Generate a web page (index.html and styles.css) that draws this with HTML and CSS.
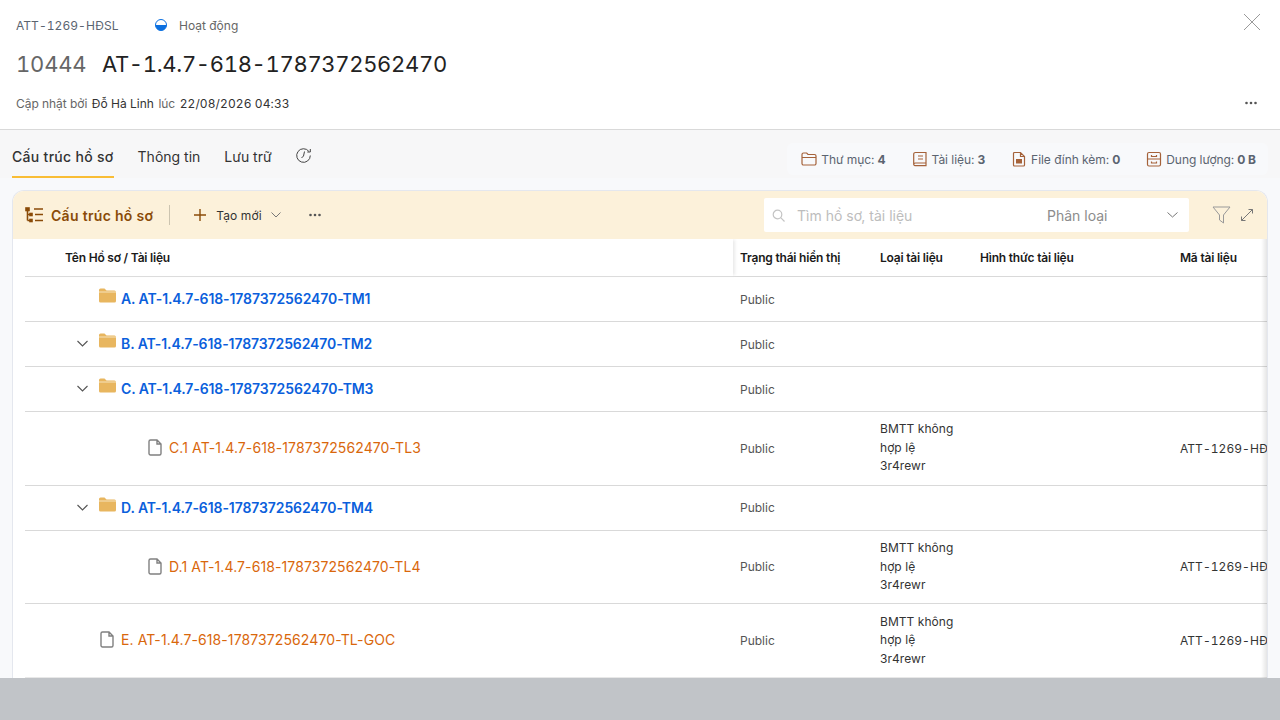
FILE: index.html
```html
<!DOCTYPE html>
<html lang="vi">
<head>
    <meta charset="UTF-8">
    <title>Cấu trúc hồ sơ</title>
    <link rel="stylesheet" href="styles.css">
</head>
<body>
    <div class="drawer">
        <header class="head">
            <div class="head-top">
                <span class="code-tag">ATT-1269-HĐSL</span>
                <svg class="status-dot" width="12" height="12" viewBox="0 0 12 12"><circle cx="6" cy="6" r="5.5" fill="#fff" stroke="#0b6fe0"/><path d="M.5 6h11A5.5 5.5 0 0 1 .5 6z" fill="#0b6fe0"/></svg>
                <span class="status-text">Hoạt động</span>
            </div>
            <div class="head-title"><span class="num">10444</span><span class="name">AT-1.4.7-618-1787372562470</span></div>
            <div class="head-meta">
                <span class="muted">Cập nhật bởi</span><span>Đỗ Hà Linh</span><span class="muted">lúc</span><span class="date">22/08/2026 04:33</span>
                <svg class="meta-more" width="12" height="4" viewBox="0 0 12 4" fill="#555"><circle cx="1.5" cy="2" r="1.3"/><circle cx="6" cy="2" r="1.3"/><circle cx="10.5" cy="2" r="1.3"/></svg>
            </div>
            <svg class="close" width="18" height="18" viewBox="0 0 18 18" stroke="#9a9a9a" fill="none"><path d="M1 1l16 16M17 1L1 17"/></svg>
        </header>

        <div class="content">
            <div class="tabbar">
                <nav class="tabs">
                    <span class="tab active">Cấu trúc hồ sơ</span>
                    <span class="tab">Thông tin</span>
                    <span class="tab">Lưu trữ</span>
                    <svg class="tab-icon" width="15" height="15" viewBox="0 0 15 15" fill="none" stroke="#444"><path d="M12.9 3.400A6.800 6.800 0 1 0 14.300 7.500M14.300 1v3h-3M8.500 3.500L7.500 8 5.500 10"/></svg>
                </nav>
                <div class="stats">
                    <span class="stat">
                        <svg width="16" height="16" viewBox="0 0 16 16" fill="none" stroke="#a5623a" stroke-width="1.200"><path d="M1 3.500a1.500 1.500 0 0 1 1.500-1.500h3.200l1.300 1.500h6.500a1.500 1.500 0 0 1 1.500 1.500v7.500a1.500 1.500 0 0 1-1.500 1.500h-11A1.500 1.500 0 0 1 1 12.500zM1 6.500h14"/></svg>
                        Thư mục: <b>4</b>
                    </span>
                    <span class="stat">
                        <svg width="16" height="16" viewBox="0 0 16 16" fill="none" stroke="#a5623a" stroke-width="1.200"><path d="M3.500 1.500h10.500v10.500H3.500A1.800 1.800 0 0 0 1.700 13.800V3.300A1.800 1.800 0 0 1 3.500 1.500zM1.700 13.300a1.800 1.800 0 0 0 1.800 1.400H14V12M6 5h5M6 8h5"/></svg>
                        Tài liệu: <b>3</b>
                    </span>
                    <span class="stat">
                        <svg width="16" height="16" viewBox="0 0 16 16" fill="none" stroke="#a5623a" stroke-width="1.200"><path d="M2.500 2.500a1 1 0 0 1 1-1h6L13.500 5.500v8.500a1 1 0 0 1-1 1h-9a1 1 0 0 1-1-1zM9.500 1.500v4h4"/><path d="M5 8h6v4.500H5z" fill="#a5623a" stroke="none"/></svg>
                        File đính kèm: <b>0</b>
                    </span>
                    <span class="stat">
                        <svg width="16" height="16" viewBox="0 0 16 16" fill="none" stroke="#a5623a" stroke-width="1.200"><rect x="1.500" y="1.500" width="13" height="13.500" rx="1.500"/><path d="M1.500 8h13M5.500 4v1.500h5V4M5.500 10.500V12h5v-1.500"/></svg>
                        Dung lượng: <b>0 B</b>
                    </span>
                </div>
            </div>

            <section class="panel">
                <div class="toolbar">
                    <svg class="tree-icon" width="18" height="16" viewBox="0 0 18 16" fill="none" stroke="#8a4b08" stroke-width="1.600"><path d="M2.500 2v11.500M2.500 7.500h4M2.500 13.500h4M9 2h9M10 7.500h8M10 13.500h8"/><rect x="1" y="1" width="3" height="2.500" fill="#8a4b08"/><rect x="5" y="6.500" width="2" height="2" fill="#8a4b08"/><rect x="5" y="12.500" width="2" height="2" fill="#8a4b08"/></svg>
                    <span class="toolbar-title">Cấu trúc hồ sơ</span>
                    <span class="divider"></span>
                    <svg class="plus" width="14" height="14" viewBox="0 0 14 14" stroke="#8a4b08" stroke-width="1.400"><path d="M7 1v12M1 7h12"/></svg>
                    <span class="new-label">Tạo mới</span>
                    <svg class="new-caret" width="10" height="6" viewBox="0 0 10 6" fill="none" stroke="#777"><path d="M.5.500L5 5 9.500.500"/></svg>
                    <svg class="tool-more" width="12" height="4" viewBox="0 0 12 4" fill="#555"><circle cx="1.500" cy="2" r="1.300"/><circle cx="6" cy="2" r="1.300"/><circle cx="10.500" cy="2" r="1.300"/></svg>
                    <div class="search">
                        <svg width="13" height="13" viewBox="0 0 13 13" fill="none" stroke="#c4c4c4" stroke-width="1.200"><circle cx="5.500" cy="5.500" r="4.300"/><path d="M8.700 8.700L12.500 12.500"/></svg>
                        <span class="search-text">Tìm hồ sơ, tài liệu</span>
                        <span class="search-type">Phân loại</span>
                        <svg width="11" height="6" viewBox="0 0 11 6" fill="none" stroke="#777"><path d="M.5.500L5.500 5l5-4.500"/></svg>
                    </div>
                    <svg class="filter" width="19" height="18" viewBox="0 0 19 18" fill="none" stroke="#999"><path d="M1 1h17l-6.500 8v8l-4-3V9z"/></svg>
                    <svg class="expand" width="14" height="14" viewBox="0 0 14 14" fill="none" stroke="#777"><path d="M1.500 12.500l11-11M8.500 1.500h4v4M1.500 8.500v4h4"/></svg>
                </div>

                <div class="table">
                    <div class="row row-head">
                        <div class="cell-name head-name">Tên Hồ sơ / Tài liệu</div>
                        <div>Trạng thái hiển thị</div>
                        <div>Loại tài liệu</div>
                        <div>Hình thức tài liệu</div>
                        <div>Mã tài liệu</div>
                    </div>

                    <div class="row">
                        <div class="cell-name lvl-1">
                            <svg class="folder" width="17" height="15" viewBox="0 0 17 15"><path d="M0 2a1.500 1.500 0 0 1 1.500-1.500h4L7.500 2.500h8A1.500 1.500 0 0 1 17 4v9a1.500 1.500 0 0 1-1.500 1.500h-14A1.500 1.500 0 0 1 0 13z" fill="#e8b65f"/><path d="M0 4h17" stroke="#f6e3bd"/></svg>
                            <a class="link-folder">A. AT-1.4.7-618-1787372562470-TM1</a>
                        </div>
                        <div class="cell-status">Public</div><div></div><div></div><div></div>
                    </div>

                    <div class="row">
                        <div class="cell-name lvl-1">
                            <svg class="caret" width="11" height="7" viewBox="0 0 11 7" fill="none" stroke="#555" stroke-width="1.100"><path d="M.5 1l5 5 5-5"/></svg>
                            <svg class="folder" width="17" height="15" viewBox="0 0 17 15"><path d="M0 2a1.500 1.500 0 0 1 1.500-1.500h4L7.500 2.500h8A1.500 1.500 0 0 1 17 4v9a1.500 1.500 0 0 1-1.500 1.500h-14A1.500 1.500 0 0 1 0 13z" fill="#e8b65f"/><path d="M0 4h17" stroke="#f6e3bd"/></svg>
                            <a class="link-folder">B. AT-1.4.7-618-1787372562470-TM2</a>
                        </div>
                        <div class="cell-status">Public</div><div></div><div></div><div></div>
                    </div>

                    <div class="row">
                        <div class="cell-name lvl-1">
                            <svg class="caret" width="11" height="7" viewBox="0 0 11 7" fill="none" stroke="#555" stroke-width="1.100"><path d="M.5 1l5 5 5-5"/></svg>
                            <svg class="folder" width="17" height="15" viewBox="0 0 17 15"><path d="M0 2a1.500 1.500 0 0 1 1.500-1.500h4L7.500 2.500h8A1.500 1.500 0 0 1 17 4v9a1.500 1.500 0 0 1-1.500 1.500h-14A1.500 1.500 0 0 1 0 13z" fill="#e8b65f"/><path d="M0 4h17" stroke="#f6e3bd"/></svg>
                            <a class="link-folder">C. AT-1.4.7-618-1787372562470-TM3</a>
                        </div>
                        <div class="cell-status">Public</div><div></div><div></div><div></div>
                    </div>

                    <div class="row row-tall">
                        <div class="cell-name lvl-2">
                            <svg class="file" width="14" height="17" viewBox="0 0 14 17" fill="none" stroke="#808080" stroke-width="1.400"><path d="M1 2.500A1.500 1.500 0 0 1 2.500 1H9l4 4v9.500a1.500 1.500 0 0 1-1.500 1.500h-9A1.500 1.500 0 0 1 1 14.500zM9 1v4h4"/></svg>
                            <a class="link-file">C.1 AT-1.4.7-618-1787372562470-TL3</a>
                        </div>
                        <div class="cell-status">Public</div>
                        <div class="cell-type">BMTT không hợp lệ<br>3r4rewr</div>
                        <div></div>
                        <div class="cell-code">ATT-1269-HĐSL</div>
                    </div>

                    <div class="row row-low">
                        <div class="cell-name lvl-1">
                            <svg class="caret" width="11" height="7" viewBox="0 0 11 7" fill="none" stroke="#555" stroke-width="1.100"><path d="M.5 1l5 5 5-5"/></svg>
                            <svg class="folder" width="17" height="15" viewBox="0 0 17 15"><path d="M0 2a1.500 1.500 0 0 1 1.500-1.500h4L7.500 2.500h8A1.500 1.500 0 0 1 17 4v9a1.500 1.500 0 0 1-1.500 1.500h-14A1.500 1.500 0 0 1 0 13z" fill="#e8b65f"/><path d="M0 4h17" stroke="#f6e3bd"/></svg>
                            <a class="link-folder">D. AT-1.4.7-618-1787372562470-TM4</a>
                        </div>
                        <div class="cell-status">Public</div><div></div><div></div><div></div>
                    </div>

                    <div class="row row-tall row-short row-low">
                        <div class="cell-name lvl-2">
                            <svg class="file" width="14" height="17" viewBox="0 0 14 17" fill="none" stroke="#808080" stroke-width="1.400"><path d="M1 2.500A1.500 1.500 0 0 1 2.500 1H9l4 4v9.500a1.500 1.500 0 0 1-1.500 1.500h-9A1.500 1.500 0 0 1 1 14.500zM9 1v4h4"/></svg>
                            <a class="link-file">D.1 AT-1.4.7-618-1787372562470-TL4</a>
                        </div>
                        <div class="cell-status">Public</div>
                        <div class="cell-type">BMTT không hợp lệ<br>3r4rewr</div>
                        <div></div>
                        <div class="cell-code">ATT-1269-HĐSL</div>
                    </div>

                    <div class="row row-tall row-last">
                        <div class="cell-name lvl-1">
                            <svg class="file" width="14" height="17" viewBox="0 0 14 17" fill="none" stroke="#808080" stroke-width="1.400"><path d="M1 2.500A1.500 1.500 0 0 1 2.500 1H9l4 4v9.500a1.500 1.500 0 0 1-1.500 1.500h-9A1.500 1.500 0 0 1 1 14.500zM9 1v4h4"/></svg>
                            <a class="link-file">E. AT-1.4.7-618-1787372562470-TL-GOC</a>
                        </div>
                        <div class="cell-status">Public</div>
                        <div class="cell-type">BMTT không hợp lệ<br>3r4rewr</div>
                        <div></div>
                        <div class="cell-code">ATT-1269-HĐSL</div>
                    </div>
                    <div class="edge-shadow"></div>
                </div>
            </section>
        </div>
    </div>
</body>
</html>
```

FILE: styles.css
```css
* {
    box-sizing: border-box;
}
html, body {
    margin: 0;
    height: 720px;
    overflow: hidden;
}
body {
    font-family: Inter, "Noto Sans", sans-serif;
    background: #c1c4c8;
    color: #222;
}
svg {
    display: block;
    flex: none;
}

.drawer {
    height: 678px;
    background: #f8f9fb;
    overflow: hidden;
    display: flex;
    flex-direction: column;
}

/* header */
.head {
    position: relative;
    height: 130px;
    padding: 17px 16px 0;
    background: #fff;
    border-bottom: 1px solid #d9d9d9;
}
.head-top {
    display: flex;
    align-items: center;
    height: 16px;
    font-size: 12px;
}
.code-tag {
    width: 139px;
    font-variant-numeric: tabular-nums;
    letter-spacing: 0.05px;
    color: #5b6470;
}
.status-text {
    margin-left: 12px;
    color: #666;
}
.head-title {
    display: flex;
    margin-top: 16px;
    height: 30px;
    line-height: 30px;
    font-size: 22px;
    font-variant-numeric: tabular-nums;
}
.num {
    width: 86px;
    letter-spacing: -0.2px;
    color: #666;
}
.name {
    letter-spacing: -0.32px;
    color: #222;
}
.head-meta {
    display: flex;
    align-items: center;
    gap: 4.5px;
    margin-top: 16px;
    height: 16px;
    font-size: 12px;
    color: #333;
}
.muted {
    letter-spacing: -0.05px;
    color: #666;
}
.date {
    font-variant-numeric: tabular-nums;
    letter-spacing: 0.1px;
}
.meta-more {
    margin-left: auto;
    margin-right: 7px;
}
.close {
    position: absolute;
    top: 13px;
    right: 19px;
}

/* tabs */
.content {
    flex: 1;
    min-height: 0;
    display: flex;
    flex-direction: column;
    padding: 0 12px;
}
.tabbar {
    display: flex;
    justify-content: space-between;
    height: 48px;
    margin: 0 -12px;
    padding: 0 12px;
    background: #f7f7f8;
}
.tabs {
    display: flex;
    align-items: flex-start;
    gap: 24px;
}
.tab {
    height: 48px;
    padding-top: 18px;
    line-height: 18px;
    font-size: 14px;
    color: #333;
}
.tab.active {
    font-weight: 500;
    letter-spacing: 0.3px;
    border-bottom: 2px solid #f9bd35;
}
.tab-icon {
    margin-top: 18px;
}
.stats {
    display: flex;
    align-items: center;
    gap: 26px;
    height: 32px;
    margin-top: 13px;
    padding: 0 12px 0 14px;
    border-radius: 6px;
    background: #f8f9fb;
    font-size: 12px;
    letter-spacing: -0.05px;
    color: #5b6470;
}
.stat {
    display: flex;
    align-items: center;
    gap: 4px;
}
.stat b {
    font-weight: 700;
    margin-left: -1px;
}

/* panel */
.panel {
    flex: 1;
    min-height: 0;
    margin-top: 12px;
    border: 1px solid #e4e7ee;
    border-bottom: 0;
    border-radius: 12px 12px 0 0;
    background: #fff;
    overflow: hidden;
    display: flex;
    flex-direction: column;
}
.toolbar {
    display: flex;
    align-items: center;
    flex: none;
    height: 48px;
    padding: 0 13px 0 12px;
    background: #fcf1da;
}
.toolbar-title {
    margin-left: 8px;
    font-size: 14px;
    font-weight: 600;
    letter-spacing: 0.3px;
    color: #8a4b08;
}
.divider {
    width: 1px;
    height: 20px;
    margin: 0 23px 0 16px;
    background: #ccc4b0;
}
.new-label {
    margin-left: 9px;
    font-size: 12px;
    letter-spacing: 0.1px;
    color: #333;
}
.new-caret {
    margin-left: 9px;
}
.tool-more {
    margin-left: 28px;
}
.search {
    display: flex;
    align-items: center;
    width: 425px;
    height: 34px;
    margin-left: auto;
    padding: 0 11px 0 8px;
    border-radius: 2px;
    background: #fff;
    font-size: 14px;
}
.search-text {
    width: 250px;
    margin-left: 12px;
    color: #bdbdbd;
}
.search-type {
    flex: 1;
    color: #8c8c8c;
}
.filter {
    margin-left: 23px;
}
.expand {
    margin-left: 9px;
}

/* table */
.table {
    position: relative;
    flex: 1;
    min-height: 0;
    padding-left: 12px;
    overflow: hidden;
}
.row {
    display: grid;
    grid-template-columns: 708px 140px 100px 200px 200px;
    width: 1348px;
    align-items: center;
    height: 45px;
    border-bottom: 1px solid #d9d9d9;
    font-size: 12px;
    color: #333;
}
.row > div {
    padding-left: 7px;
}
.row-head {
    height: 38px;
    font-weight: 600;
    letter-spacing: -0.2px;
    color: #1a1a1a;
}
.row-tall {
    height: 74px;
}
.row-short {
    height: 73px;
}
.row-last {
    border-bottom: 1px solid #e8e8e8;
}
.row > .cell-name {
    display: flex;
    align-items: center;
    align-self: stretch;
    padding-bottom: 2px;
    font-size: 14px;
}
.row > .head-name {
    padding-left: 40px;
    padding-bottom: 0;
    font-size: 12px;
    box-shadow: 3px 0 3px -1px #eaeaea;
}
.row > .lvl-1 {
    padding-left: 74px;
}
.row > .lvl-2 {
    padding-left: 123px;
}
.row-last > .cell-name.lvl-1 {
    padding-left: 75px;
}
.caret {
    margin-left: -22px;
    margin-right: 11px;
}
.folder {
    margin-top: -5px;
    margin-right: 5px;
}
.file {
    margin-right: 7px;
}
.link-folder {
    font-weight: 600;
    letter-spacing: -0.1px;
    color: #0b5fdc;
}
.link-file {
    letter-spacing: 0.1px;
    color: #d9670c;
}
.cell-status {
    color: #555;
}
.row > .cell-type {
    padding-bottom: 1px;
    line-height: 18.6px;
    letter-spacing: 0.05px;
    color: #333;
}
.row-low > .cell-status,
.row-low > .cell-code {
    padding-bottom: 2px;
}
.row-low > .cell-type,
.row-last > .cell-type {
    padding-bottom: 0;
}
.cell-code {
    font-variant-numeric: tabular-nums;
    letter-spacing: 0.05px;
    white-space: nowrap;
}
.edge-shadow {
    position: absolute;
    top: 0;
    right: 0;
    bottom: 0;
    width: 6px;
    background: linear-gradient(to right, rgba(0, 0, 0, 0), rgba(0, 0, 0, 0.1));
}
```
